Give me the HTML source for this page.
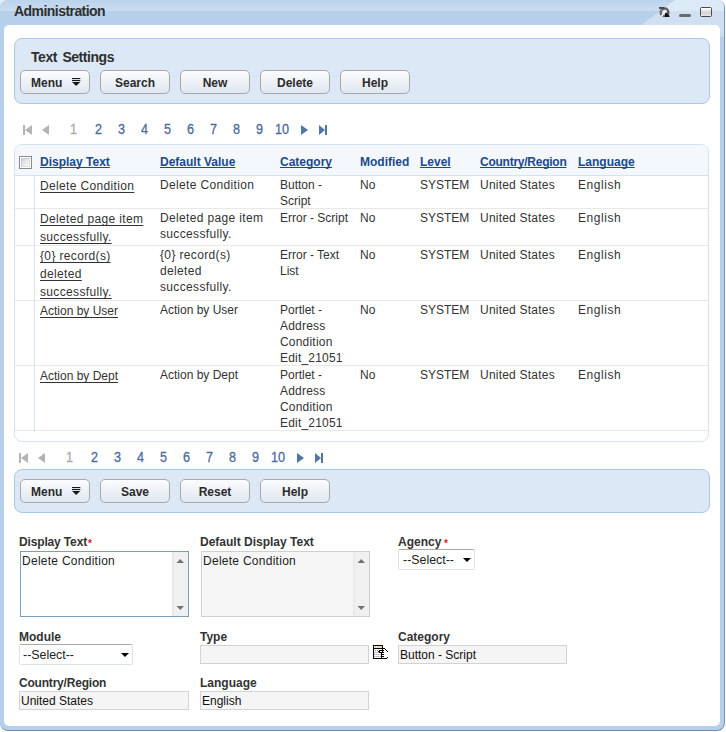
<!DOCTYPE html>
<html><head><meta charset="utf-8">
<style>
*{box-sizing:border-box;}
html,body{margin:0;padding:0;background:#fff;width:726px;height:732px;overflow:hidden;}
body{font-family:"Liberation Sans",sans-serif;font-size:12px;color:#333;position:relative;}
.abs{position:absolute;}
#frame{position:absolute;left:0;top:0;width:725px;height:731px;background:#b6cfea;border-radius:8px;border-right:1px solid #7893c0;border-bottom:1px solid #6f8cbd;overflow:hidden;}
#hband{position:absolute;left:0;top:0;width:725px;height:11px;background:linear-gradient(#bbd3eb,#c9ddf1);border-radius:8px 8px 0 0;}
#diag{position:absolute;left:0;top:0;width:725px;height:25px;}
#title{position:absolute;left:14px;top:2px;font-weight:bold;font-size:14px;letter-spacing:-0.55px;color:#2e2e2e;line-height:18px;}
#content{position:absolute;left:4px;top:25px;width:716px;height:701px;background:#fff;border-radius:5px;}
.panel{position:absolute;background:#dce8f5;border:1px solid #abc8e7;border-radius:8px;}
.ptitle{position:absolute;font-weight:bold;font-size:14px;letter-spacing:-0.45px;word-spacing:2px;color:#2e2e2e;line-height:16px;}
.btn{position:absolute;width:70px;height:24px;border:1px solid #a8a8a8;border-radius:5px;background:linear-gradient(#fbfcfe,#dfe7f0);font-weight:bold;font-size:12px;color:#2b2b2b;text-align:center;line-height:24px;}
.pg{position:absolute;font-size:14px;color:#4c6c9c;line-height:16px;-webkit-text-stroke:0.3px #4c6c9c;transform:scaleX(0.9);transform-origin:0 0;}
.pg.dis{-webkit-text-stroke:0.3px #aaaaaa;}
.pg.dis{color:#aaaaaa;}
.hdr{position:absolute;font-weight:bold;color:#1a4a8a;text-decoration:underline;text-decoration-skip-ink:none;line-height:16px;}
.cell{position:absolute;line-height:16px;color:#333;white-space:nowrap;}
.lnk{position:absolute;line-height:18px;color:#333;white-space:nowrap;}
.lnk span{text-decoration:underline;text-decoration-skip-ink:none;text-underline-offset:2px;}
.lbl{position:absolute;font-weight:bold;color:#333;line-height:16px;}
.req{color:#e02020;}
.sel{border:1px solid #dde2e8;border-top-color:#a9a9a9;border-radius:2px;background:#fff;}
.inp{position:absolute;background:#f5f5f5;border:1px solid #d3d3d3;color:#111;line-height:17px;padding-left:1px;padding-top:1px;}
</style></head>
<body>
<div class="abs" style="left:0;top:0;width:8px;height:8px;background:#e3ecf7;"></div>
<div id="frame">
  <div id="hband"></div>
  <svg id="diag" width="725" height="25"><polygon points="641,25 675,0 725,0 725,25" fill="#d0e0f2"/><polygon points="660,11 675,0 725,0 725,11" fill="#dce9f6"/></svg>
  <div class="abs" style="left:712px;top:25px;width:12px;height:12px;background:linear-gradient(#d0e0f2,#c8dbf0);"></div>
  <div id="title">Administration</div>
  <div id="content"></div>
</div>

<!-- header icons -->
<svg class="abs" style="left:656px;top:4px" width="60" height="16">
  <circle cx="8.5" cy="8.3" r="3.8" fill="none" stroke="#5c5c5c" stroke-width="2.5"/>
  <path d="M7.2,4.6 A3.8,3.8 0 0 0 5.2,10" fill="none" stroke="#8a8a8a" stroke-width="1"/>
  <path d="M5.4,12.4 L10,6" stroke="#f2f2f2" stroke-width="1.7"/>
  <rect x="3" y="3" width="5" height="1.8" fill="#454545"/>
  <polygon points="9,13 13.6,13 13.2,11.6 10.2,8.6 9,9.4" fill="#111"/>
  <rect x="23" y="10" width="12" height="3" rx="1.5" fill="#6a6a6a"/>
</svg>
<div class="abs" style="left:700px;top:7px;width:12px;height:10px;border:1px solid #4a4a4a;border-radius:1.5px;background:linear-gradient(#ffffff,#d4d4d4 60%,#e6e6e6);"></div>

<!-- Panel 1 -->
<div class="panel" style="left:14px;top:38px;width:696px;height:66px;"></div>
<div class="ptitle" style="left:31px;top:49px;">Text Settings</div>
<div class="btn" style="left:20px;top:70px;text-align:left;padding-left:10px;">Menu</div><svg class="abs" style="left:72px;top:78px" width="9" height="9"><rect x="0" y="0" width="8.3" height="1.1" fill="#1a1a1a"/><rect x="0" y="2" width="8.3" height="1.1" fill="#1a1a1a"/><polygon points="0,4 8.3,4 4.15,8" fill="#1a1a1a"/></svg>
<div class="btn" style="left:100px;top:70px;">Search</div>
<div class="btn" style="left:180px;top:70px;">New</div>
<div class="btn" style="left:260px;top:70px;">Delete</div>
<div class="btn" style="left:340px;top:70px;">Help</div>

<!-- Pagination 1 -->
<svg class="abs" style="left:23px;top:125px" width="9" height="10"><rect x="0" y="0" width="2" height="10" fill="#b4b4b4"/><polygon points="9,0 9,10 2,5" fill="#b4b4b4"/></svg>
<svg class="abs" style="left:42px;top:125px" width="7" height="10"><polygon points="7,0 7,10 0,5" fill="#b4b4b4"/></svg>
<div class="pg dis" style="left:70px;top:121px;">1</div>
<div class="pg" style="left:95px;top:121px;">2</div>
<div class="pg" style="left:118px;top:121px;">3</div>
<div class="pg" style="left:141px;top:121px;">4</div>
<div class="pg" style="left:164px;top:121px;">5</div>
<div class="pg" style="left:187px;top:121px;">6</div>
<div class="pg" style="left:210px;top:121px;">7</div>
<div class="pg" style="left:233px;top:121px;">8</div>
<div class="pg" style="left:256px;top:121px;">9</div>
<div class="pg" style="left:275px;top:121px;">10</div>
<svg class="abs" style="left:301px;top:125px" width="7" height="10"><polygon points="0,0 0,10 7,5" fill="#5076a6"/></svg>
<svg class="abs" style="left:319px;top:125px" width="8" height="10"><polygon points="0,0 0,10 6,5" fill="#5076a6"/><rect x="6" y="0" width="2" height="10" fill="#5076a6"/></svg>

<!-- Table -->
<div class="abs" style="left:14px;top:144px;width:695px;height:298px;border:1px solid #d4e3f2;border-radius:8px;overflow:hidden;background:#fff;">
  <div class="abs" style="left:0;top:0;width:693px;height:31px;background:#f4f8fc;border-bottom:1px solid #d4e3f2;"></div>
  <div class="abs" style="left:19px;top:31px;width:1px;height:256px;background:#d6e4f3;"></div>
  <div class="abs" style="left:0;top:63px;width:693px;height:1px;background:#e8e8e8;"></div>
  <div class="abs" style="left:0;top:100px;width:693px;height:1px;background:#e8e8e8;"></div>
  <div class="abs" style="left:0;top:155px;width:693px;height:1px;background:#e8e8e8;"></div>
  <div class="abs" style="left:0;top:220px;width:693px;height:1px;background:#e8e8e8;"></div>
  <div class="abs" style="left:0;top:285px;width:693px;height:1px;background:#e8e8e8;"></div>
</div>
<div class="abs" style="left:19px;top:156px;width:13px;height:13px;border:1px solid #8a8a8a;background:#fff;"></div><div class="abs" style="left:21px;top:158px;width:9px;height:9px;border:1px solid #c2c8d0;border-right-color:#dcdcdc;border-bottom-color:#dcdcdc;background:linear-gradient(135deg,#d3d9e2,#f9f9f9);"></div>
<div class="hdr" style="left:40px;top:154px;">Display Text</div>
<div class="hdr" style="left:160px;top:154px;">Default Value</div>
<div class="hdr" style="left:280px;top:154px;">Category</div>
<div class="hdr" style="left:360px;top:154px;text-decoration:none;">Modified</div>
<div class="hdr" style="left:420px;top:154px;">Level</div>
<div class="hdr" style="left:480px;top:154px;letter-spacing:-0.25px;">Country/Region</div>
<div class="hdr" style="left:578px;top:154px;">Language</div>

<div class="lnk" style="left:40px;top:177px;letter-spacing:0.35px;"><span>Delete Condition</span></div>
<div class="cell" style="left:160px;top:177px;letter-spacing:0.35px;">Delete Condition</div>
<div class="cell" style="left:280px;top:177px;">Button -<br>Script</div>
<div class="cell" style="left:360px;top:177px;">No</div>
<div class="cell" style="left:420px;top:177px;">SYSTEM</div>
<div class="cell" style="left:480px;top:177px;letter-spacing:0.22px;">United States</div>
<div class="cell" style="left:578px;top:177px;letter-spacing:0.55px;">English</div>

<div class="lnk" style="left:40px;top:210px;letter-spacing:0.35px;"><span>Deleted page item</span><br><span>successfully.</span></div>
<div class="cell" style="left:160px;top:210px;letter-spacing:0.35px;">Deleted page item<br>successfully.</div>
<div class="cell" style="left:280px;top:210px;">Error - Script</div>
<div class="cell" style="left:360px;top:210px;">No</div>
<div class="cell" style="left:420px;top:210px;">SYSTEM</div>
<div class="cell" style="left:480px;top:210px;letter-spacing:0.22px;">United States</div>
<div class="cell" style="left:578px;top:210px;letter-spacing:0.55px;">English</div>

<div class="lnk" style="left:40px;top:247px;letter-spacing:0.35px;"><span>{0} record(s)</span><br><span>deleted</span><br><span>successfully.</span></div>
<div class="cell" style="left:160px;top:247px;letter-spacing:0.35px;">{0} record(s)<br>deleted<br>successfully.</div>
<div class="cell" style="left:280px;top:247px;">Error - Text<br>List</div>
<div class="cell" style="left:360px;top:247px;">No</div>
<div class="cell" style="left:420px;top:247px;">SYSTEM</div>
<div class="cell" style="left:480px;top:247px;letter-spacing:0.22px;">United States</div>
<div class="cell" style="left:578px;top:247px;letter-spacing:0.55px;">English</div>

<div class="lnk" style="left:40px;top:302px;"><span>Action by User</span></div>
<div class="cell" style="left:160px;top:302px;">Action by User</div>
<div class="cell" style="left:280px;top:302px;">Portlet -<br><span style="letter-spacing:0.2px">Address<br>Condition<br>Edit_21051</span></div>
<div class="cell" style="left:360px;top:302px;">No</div>
<div class="cell" style="left:420px;top:302px;">SYSTEM</div>
<div class="cell" style="left:480px;top:302px;letter-spacing:0.22px;">United States</div>
<div class="cell" style="left:578px;top:302px;letter-spacing:0.55px;">English</div>

<div class="lnk" style="left:40px;top:367px;"><span>Action by Dept</span></div>
<div class="cell" style="left:160px;top:367px;">Action by Dept</div>
<div class="cell" style="left:280px;top:367px;">Portlet -<br><span style="letter-spacing:0.2px">Address<br>Condition<br>Edit_21051</span></div>
<div class="cell" style="left:360px;top:367px;">No</div>
<div class="cell" style="left:420px;top:367px;">SYSTEM</div>
<div class="cell" style="left:480px;top:367px;letter-spacing:0.22px;">United States</div>
<div class="cell" style="left:578px;top:367px;letter-spacing:0.55px;">English</div>

<!-- Pagination 2 -->
<svg class="abs" style="left:19px;top:453px" width="9" height="10"><rect x="0" y="0" width="2" height="10" fill="#b4b4b4"/><polygon points="9,0 9,10 2,5" fill="#b4b4b4"/></svg>
<svg class="abs" style="left:38px;top:453px" width="7" height="10"><polygon points="7,0 7,10 0,5" fill="#b4b4b4"/></svg>
<div class="pg dis" style="left:66px;top:449px;">1</div>
<div class="pg" style="left:91px;top:449px;">2</div>
<div class="pg" style="left:114px;top:449px;">3</div>
<div class="pg" style="left:137px;top:449px;">4</div>
<div class="pg" style="left:160px;top:449px;">5</div>
<div class="pg" style="left:183px;top:449px;">6</div>
<div class="pg" style="left:206px;top:449px;">7</div>
<div class="pg" style="left:229px;top:449px;">8</div>
<div class="pg" style="left:252px;top:449px;">9</div>
<div class="pg" style="left:271px;top:449px;">10</div>
<svg class="abs" style="left:297px;top:453px" width="7" height="10"><polygon points="0,0 0,10 7,5" fill="#5076a6"/></svg>
<svg class="abs" style="left:315px;top:453px" width="8" height="10"><polygon points="0,0 0,10 6,5" fill="#5076a6"/><rect x="6" y="0" width="2" height="10" fill="#5076a6"/></svg>

<!-- Panel 2 -->
<div class="panel" style="left:14px;top:469px;width:696px;height:44px;"></div>
<div class="btn" style="left:20px;top:479px;text-align:left;padding-left:10px;">Menu</div><svg class="abs" style="left:72px;top:487px" width="9" height="9"><rect x="0" y="0" width="8.3" height="1.1" fill="#1a1a1a"/><rect x="0" y="2" width="8.3" height="1.1" fill="#1a1a1a"/><polygon points="0,4 8.3,4 4.15,8" fill="#1a1a1a"/></svg>
<div class="btn" style="left:100px;top:479px;">Save</div>
<div class="btn" style="left:180px;top:479px;">Reset</div>
<div class="btn" style="left:260px;top:479px;">Help</div>

<!-- Form -->
<div class="lbl" style="left:19px;top:534px;letter-spacing:-0.15px;">Display Text</div><div class="abs req" style="left:88px;top:539px;font-size:10px;line-height:10px;font-weight:bold;">*</div>
<div class="abs" style="left:20px;top:551px;width:169px;height:66px;border:1px solid #7f9db9;background:#fff;"></div>
<div class="abs" style="left:22px;top:552px;line-height:18px;color:#222;letter-spacing:0.27px;">Delete Condition</div>
<div class="abs" style="left:172px;top:552px;width:16px;height:64px;background:linear-gradient(90deg,#e6e6e6,#f0f0f0 3px,#f0f0f0);"></div>
<svg class="abs" style="left:176px;top:558px" width="9" height="54"><polygon points="0.5,5 8,5 4.25,1" fill="#727272"/><polygon points="0.5,48 8,48 4.25,52" fill="#727272"/></svg>

<div class="lbl" style="left:200px;top:534px;">Default Display Text</div>
<div class="abs" style="left:201px;top:551px;width:169px;height:66px;border:1px solid #cfcfcf;background:#f6f6f6;"></div>
<div class="abs" style="left:203px;top:552px;line-height:18px;color:#222;letter-spacing:0.27px;">Delete Condition</div>
<div class="abs" style="left:353px;top:552px;width:16px;height:64px;background:linear-gradient(90deg,#e6e6e6,#f0f0f0 3px,#f0f0f0);"></div>
<svg class="abs" style="left:357px;top:558px" width="9" height="54"><polygon points="0.5,5 8,5 4.25,1" fill="#727272"/><polygon points="0.5,48 8,48 4.25,52" fill="#727272"/></svg>

<div class="lbl" style="left:398px;top:534px;">Agency</div><div class="abs req" style="left:444px;top:539px;font-size:10px;line-height:10px;font-weight:bold;">*</div>
<div class="abs sel" style="left:398px;top:549px;width:77px;height:21px;"></div><svg class="abs" style="left:463px;top:558px" width="8" height="4"><polygon points="0,0 8,0 4,4" fill="#000"/></svg>
<div class="abs" style="left:403px;top:552px;line-height:17px;color:#222;font-size:12.4px;">--Select--</div>

<div class="lbl" style="left:19px;top:629px;">Module</div>
<div class="abs sel" style="left:19px;top:644px;width:114px;height:21px;"></div><svg class="abs" style="left:121px;top:653px" width="8" height="4"><polygon points="0,0 8,0 4,4" fill="#000"/></svg>
<div class="abs" style="left:23px;top:647px;line-height:17px;color:#222;font-size:12.4px;">--Select--</div>

<div class="lbl" style="left:200px;top:629px;">Type</div>
<div class="inp" style="left:200px;top:645px;width:169px;height:19px;"></div>

<svg class="abs" style="left:373px;top:645px" width="16" height="15" shape-rendering="crispEdges"><rect x="0" y="0" width="1" height="1" fill="#000"/><rect x="1" y="0" width="1" height="1" fill="#000"/><rect x="2" y="0" width="1" height="1" fill="#000"/><rect x="3" y="0" width="1" height="1" fill="#000"/><rect x="4" y="0" width="1" height="1" fill="#000"/><rect x="5" y="0" width="1" height="1" fill="#000"/><rect x="6" y="0" width="1" height="1" fill="#000"/><rect x="7" y="0" width="1" height="1" fill="#000"/><rect x="8" y="0" width="1" height="1" fill="#000"/><rect x="9" y="0" width="1" height="1" fill="#101060"/><rect x="0" y="1" width="1" height="1" fill="#000"/><rect x="0" y="2" width="1" height="1" fill="#000"/><rect x="0" y="3" width="1" height="1" fill="#000"/><rect x="0" y="4" width="1" height="1" fill="#000"/><rect x="0" y="5" width="1" height="1" fill="#000"/><rect x="0" y="6" width="1" height="1" fill="#000"/><rect x="0" y="7" width="1" height="1" fill="#000"/><rect x="0" y="8" width="1" height="1" fill="#000"/><rect x="0" y="9" width="1" height="1" fill="#000"/><rect x="0" y="10" width="1" height="1" fill="#000"/><rect x="0" y="11" width="1" height="1" fill="#000"/><rect x="0" y="12" width="1" height="1" fill="#000"/><rect x="0" y="13" width="1" height="1" fill="#000"/><rect x="1" y="1" width="1" height="1" fill="#fff7a8"/><rect x="1" y="2" width="1" height="1" fill="#f4c0c0"/><rect x="2" y="1" width="1" height="1" fill="#f4c0c0"/><rect x="2" y="2" width="1" height="1" fill="#c8f0c8"/><rect x="3" y="1" width="1" height="1" fill="#c8f0c8"/><rect x="3" y="2" width="1" height="1" fill="#fff7a8"/><rect x="4" y="1" width="1" height="1" fill="#fff7a8"/><rect x="4" y="2" width="1" height="1" fill="#f4c0c0"/><rect x="5" y="1" width="1" height="1" fill="#f4c0c0"/><rect x="5" y="2" width="1" height="1" fill="#c8f0c8"/><rect x="6" y="1" width="1" height="1" fill="#c8f0c8"/><rect x="6" y="2" width="1" height="1" fill="#fff7a8"/><rect x="7" y="1" width="1" height="1" fill="#fff7a8"/><rect x="7" y="2" width="1" height="1" fill="#f4c0c0"/><rect x="8" y="1" width="1" height="1" fill="#f4c0c0"/><rect x="8" y="2" width="1" height="1" fill="#c8f0c8"/><rect x="9" y="1" width="1" height="1" fill="#000"/><rect x="9" y="2" width="1" height="1" fill="#000"/><rect x="1" y="3" width="1" height="1" fill="#000"/><rect x="2" y="3" width="1" height="1" fill="#000"/><rect x="3" y="3" width="1" height="1" fill="#000"/><rect x="4" y="3" width="1" height="1" fill="#000"/><rect x="5" y="3" width="1" height="1" fill="#000"/><rect x="6" y="3" width="1" height="1" fill="#000"/><rect x="7" y="3" width="1" height="1" fill="#000"/><rect x="8" y="3" width="1" height="1" fill="#000"/><rect x="9" y="3" width="1" height="1" fill="#000"/><rect x="10" y="3" width="1" height="1" fill="#000"/><rect x="11" y="3" width="1" height="1" fill="#000"/><rect x="12" y="4" width="1" height="1" fill="#000"/><rect x="13" y="5" width="1" height="1" fill="#000"/><rect x="14" y="6" width="1" height="1" fill="#000"/><rect x="6" y="5" width="1" height="1" fill="#000"/><rect x="7" y="5" width="1" height="1" fill="#000"/><rect x="8" y="5" width="1" height="1" fill="#000"/><rect x="9" y="5" width="1" height="1" fill="#000"/><rect x="10" y="5" width="1" height="1" fill="#000"/><rect x="5" y="6" width="1" height="1" fill="#000"/><rect x="6" y="6" width="1" height="1" fill="#000"/><rect x="6" y="7" width="1" height="1" fill="#000"/><rect x="7" y="7" width="1" height="1" fill="#000"/><rect x="8" y="7" width="1" height="1" fill="#000"/><rect x="9" y="7" width="1" height="1" fill="#000"/><rect x="9" y="4" width="1" height="1" fill="#000"/><rect x="9" y="6" width="1" height="1" fill="#000"/><rect x="8" y="8" width="1" height="1" fill="#000"/><rect x="8" y="9" width="1" height="1" fill="#000"/><rect x="8" y="10" width="1" height="1" fill="#000"/><rect x="8" y="11" width="1" height="1" fill="#000"/><rect x="8" y="12" width="1" height="1" fill="#000"/><rect x="8" y="13" width="1" height="1" fill="#000"/><rect x="9" y="9" width="1" height="1" fill="#000"/><rect x="10" y="9" width="1" height="1" fill="#000"/><rect x="9" y="11" width="1" height="1" fill="#000"/><rect x="10" y="11" width="1" height="1" fill="#000"/><rect x="10" y="7" width="1" height="1" fill="#000"/><rect x="1" y="13" width="1" height="1" fill="#000"/><rect x="2" y="13" width="1" height="1" fill="#000"/><rect x="3" y="13" width="1" height="1" fill="#000"/><rect x="4" y="13" width="1" height="1" fill="#000"/><rect x="5" y="13" width="1" height="1" fill="#000"/><rect x="6" y="13" width="1" height="1" fill="#000"/><rect x="7" y="13" width="1" height="1" fill="#000"/><rect x="9" y="13" width="1" height="1" fill="#000"/><rect x="10" y="13" width="1" height="1" fill="#000"/><rect x="11" y="13" width="1" height="1" fill="#000"/><rect x="12" y="13" width="1" height="1" fill="#000"/><rect x="13" y="13" width="1" height="1" fill="#000"/><rect x="14" y="12" width="1" height="1" fill="#000"/><rect x="2" y="5" width="1" height="1" fill="#999"/><rect x="4" y="5" width="1" height="1" fill="#999"/><rect x="1" y="7" width="1" height="1" fill="#f0a0a0"/><rect x="2" y="7" width="1" height="1" fill="#a0e0e0"/><rect x="3" y="7" width="1" height="1" fill="#f0a0a0"/><rect x="4" y="7" width="1" height="1" fill="#a0e0e0"/><rect x="5" y="7" width="1" height="1" fill="#f0a0a0"/><rect x="1" y="9" width="1" height="1" fill="#f0a0a0"/><rect x="2" y="9" width="1" height="1" fill="#a0e0e0"/><rect x="3" y="9" width="1" height="1" fill="#f0a0a0"/><rect x="4" y="9" width="1" height="1" fill="#a0e0e0"/><rect x="5" y="9" width="1" height="1" fill="#f0a0a0"/><rect x="6" y="9" width="1" height="1" fill="#a0e0e0"/><rect x="7" y="9" width="1" height="1" fill="#f0a0a0"/><rect x="1" y="11" width="1" height="1" fill="#f0a0a0"/><rect x="2" y="11" width="1" height="1" fill="#a0e0e0"/><rect x="3" y="11" width="1" height="1" fill="#f0a0a0"/><rect x="4" y="11" width="1" height="1" fill="#a0e0e0"/><rect x="5" y="11" width="1" height="1" fill="#f0a0a0"/><rect x="6" y="11" width="1" height="1" fill="#a0e0e0"/><rect x="7" y="11" width="1" height="1" fill="#f0a0a0"/></svg>
<div class="lbl" style="left:398px;top:629px;">Category</div>
<div class="inp" style="left:398px;top:645px;width:169px;height:19px;">Button - Script</div>

<div class="lbl" style="left:19px;top:675px;letter-spacing:-0.2px;">Country/Region</div>
<div class="inp" style="left:19px;top:691px;width:170px;height:19px;">United States</div>

<div class="lbl" style="left:200px;top:675px;">Language</div>
<div class="inp" style="left:200px;top:691px;width:169px;height:19px;">English</div>

</body></html>
